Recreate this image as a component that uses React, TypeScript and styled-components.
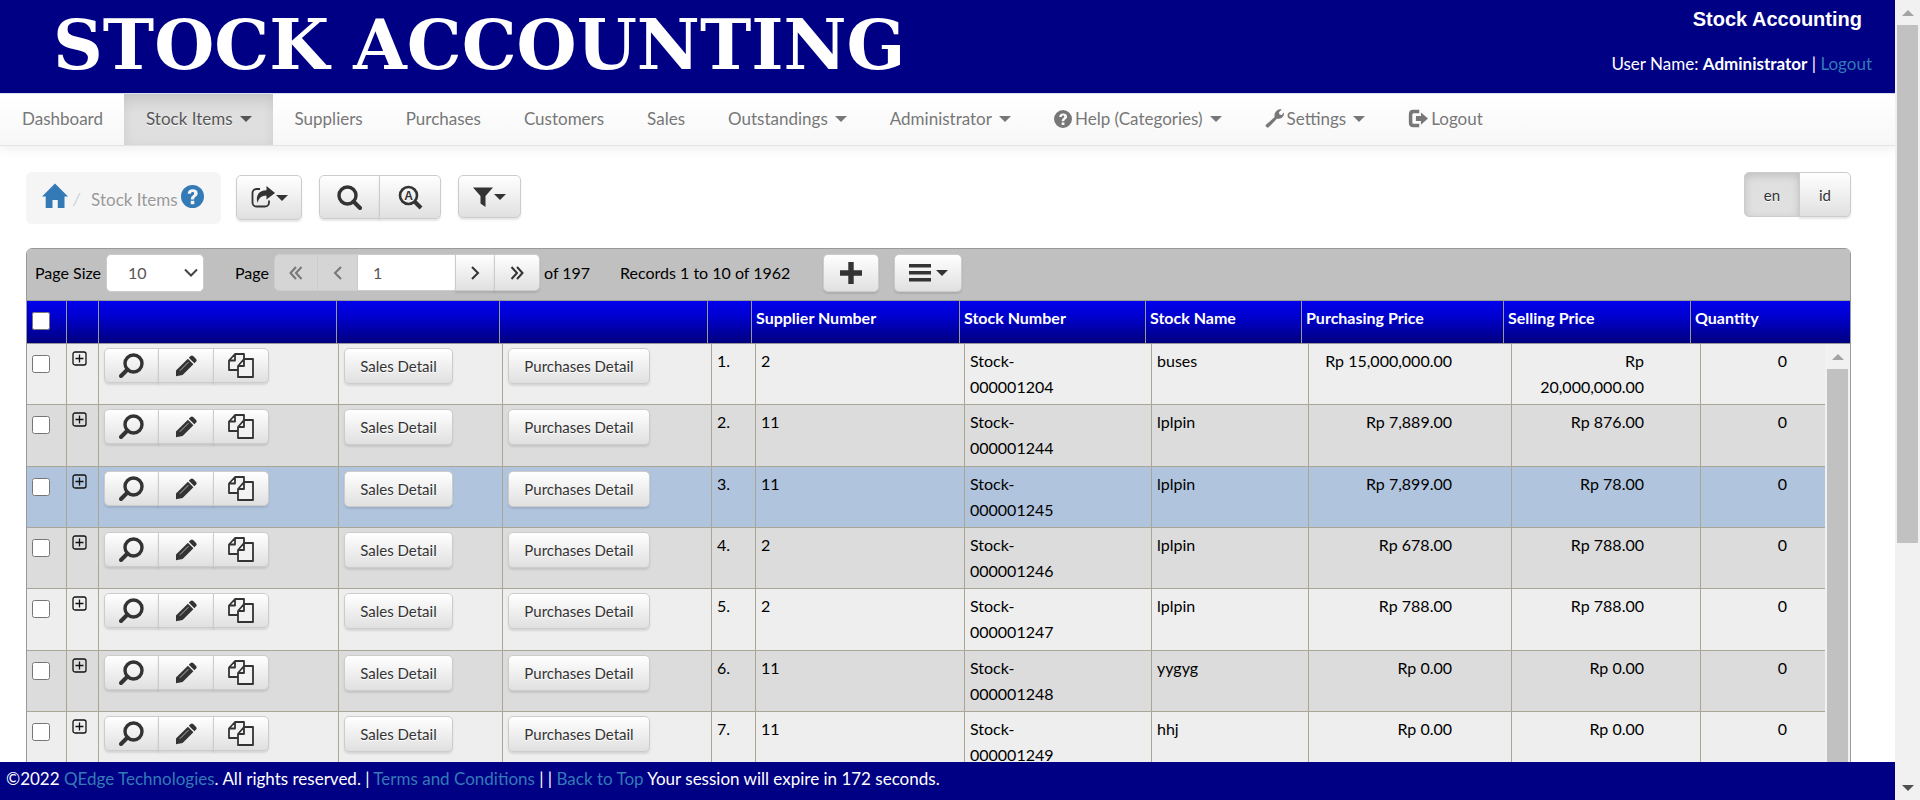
import React from "react";
import styled, { createGlobalStyle, css } from "styled-components";

const GlobalStyle = createGlobalStyle`
  *, *::before, *::after { box-sizing: border-box; }
  body {
    margin: 0;
    background: #fff;
    color: #000;
    font: 16px/26px Lato, "Liberation Sans", sans-serif;
  }
  button, input, select { font: inherit; margin: 0; }
  a { color: #337ab7; text-decoration: none; }
`;

/* ---------- shell ---------- */

const Shell = styled.div`
  display: flex;
  height: 100vh;
  overflow: hidden;
`;

const Page = styled.div`
  flex: 1;
  min-width: 0;
  display: flex;
  flex-direction: column;
`;

const Main = styled.main`
  flex: 1;
  min-height: 0;
  overflow: hidden;
  padding: 26px 44px 0 26px;
`;

const ScrollTrack = styled.div`
  flex: none;
  width: 25px;
  display: flex;
  flex-direction: column;
  align-items: center;
  background: #f1f1f1;
`;

const ScrollArrow = styled.span<{ $down?: boolean }>`
  flex: none;
  height: 25px;
  display: flex;
  align-items: center;
  &::before {
    content: "";
    border: 6px solid transparent;
    border-top-width: ${(p) => (p.$down ? "6px" : "0")};
    border-bottom-width: ${(p) => (p.$down ? "0" : "6px")};
    border-top-color: ${(p) => (p.$down ? "#505050" : "transparent")};
    border-bottom-color: ${(p) => (p.$down ? "transparent" : "#a3a3a3")};
  }
`;

const ScrollLane = styled.span`
  flex: 1;
  width: 21px;
`;

const ScrollThumb = styled.span<{ $size: string }>`
  display: block;
  width: 21px;
  height: ${(p) => p.$size};
  background: #c1c1c1;
`;

/* ---------- header ---------- */

const Banner = styled.header`
  flex: none;
  height: 93px;
  display: flex;
  justify-content: space-between;
  padding: 0 23px 0 53px;
  background: #000084;
  color: #fff;
  font-size: 17px;
`;

const Logo = styled.div`
  font: bold 69px/90px "DejaVu Serif", serif;
  white-space: nowrap;
`;

const Account = styled.div`
  display: flex;
  flex-direction: column;
  gap: 19px;
  padding-top: 6px;
  text-align: right;
`;

const SiteName = styled.strong`
  padding-right: 10px;
  font: bold 20px/26px "Liberation Sans", sans-serif;
`;

const Nav = styled.nav`
  flex: none;
  height: 53px;
  display: flex;
  border-top: 1px solid #dcdcf0;
  border-bottom: 1px solid #e3e3e3;
  background: linear-gradient(#fff, #f7f7f7);
  box-shadow: 0 2px 12px rgba(0, 0, 0, 0.08);
  font-size: 17px;
`;

const NavLink = styled.a<{ $active?: boolean }>`
  display: flex;
  align-items: center;
  gap: 3px;
  padding: 0 21px 2px 22px;
  color: #777;
  white-space: nowrap;
  text-shadow: 0 1px 0 #fff;
  ${(p) =>
    p.$active &&
    css`
      color: #555;
      background: linear-gradient(#d4d4d4, #dfdfdf 40%, #dedede);
      box-shadow: inset 0 3px 12px rgba(0, 0, 0, 0.08);
    `}
`;

const Caret = styled.span<{ $gap?: boolean }>`
  margin-left: ${(p) => (p.$gap ? "4px" : "0")};
  border: 6px solid transparent;
  border-top-color: currentColor;
  border-bottom: 0;
`;

/* ---------- controls ---------- */

const Actions = styled.div`
  display: flex;
  align-items: flex-start;
  height: 76px;
`;

const Crumbs = styled.nav`
  display: flex;
  align-items: center;
  width: 195px;
  height: 52px;
  margin-right: 15px;
  padding: 0 12px 0 16px;
  border-radius: 6px;
  background: #f5f5f5;
  color: #999;
  font-size: 17px;
  white-space: nowrap;
  a { display: flex; padding-bottom: 4px; }
`;

const CrumbText = styled.span`
  padding: 3px 3px 0 5px;
  text-shadow: 0 1px 0 #fff;
  i { margin-right: 11px; color: #ccc; }
`;

const Button = styled.button<{ $w?: number; $h?: number; $pressed?: boolean }>`
  display: inline-flex;
  align-items: center;
  justify-content: center;
  gap: 1px;
  width: ${(p) => (p.$w ? `${p.$w}px` : "auto")};
  height: ${(p) => p.$h ?? 37}px;
  padding: 0;
  border: 1px solid #ccc;
  border-radius: 5px;
  background: linear-gradient(#fff, #e0e0e0);
  box-shadow: 0 2px 2px rgba(0, 0, 0, 0.1);
  color: #333;
  font-size: 15px;
  text-shadow: 0 1px 0 #fff;
  white-space: nowrap;
  ${(p) =>
    p.$pressed &&
    css`
      background: #e0e0e0;
      box-shadow: inset 0 3px 8px rgba(0, 0, 0, 0.15);
    `}
  &:disabled {
    background: #d5d5d5;
    border-color: #ccc;
    color: #777;
    box-shadow: none;
  }
`;

const Group = styled.div`
  display: flex;
  > *:not(:first-child) {
    margin-left: -1px;
    border-top-left-radius: 0;
    border-bottom-left-radius: 0;
  }
  > *:not(:last-child) {
    border-top-right-radius: 0;
    border-bottom-right-radius: 0;
  }
`;

const Tools = styled.div`
  display: flex;
  align-items: flex-start;
  flex: 1;
  gap: 17px;
  padding-top: 3px;
`;

/* ---------- grid ---------- */

const Panel = styled.section`
  border: 1px solid #999;
  border-radius: 6px 6px 0 0;
  background: #fff;
  overflow: hidden;
`;

const Pager = styled.div`
  display: flex;
  align-items: center;
  height: 52px;
  padding: 0 8px 4px;
  border-bottom: 1px solid #999;
  background: #c0c0c0;
  white-space: nowrap;
`;

const PageSizeLabel = styled.label`
  width: 71px;
`;

const PageLabel = styled.label`
  width: 39px;
  margin-left: 31px;
`;

const SelectBox = styled.span`
  position: relative;
  display: flex;
  svg {
    position: absolute;
    right: 6px;
    top: 14px;
    pointer-events: none;
  }
`;

const SizeSelect = styled.select`
  appearance: none;
  width: 98px;
  height: 38px;
  padding: 0 0 0 21px;
  border: 1px solid #ccc;
  border-radius: 5px;
  background: #fff;
  color: #555;
`;

const PageInput = styled.input`
  width: 99px;
  height: 37px;
  padding: 0 15px;
  border: 1px solid #ccc;
  border-radius: 5px;
  background: #fff;
  color: #555;
`;

const PageCount = styled.span`
  width: 80px;
  padding-left: 4px;
`;

const RecordCount = styled.span`
  width: 203px;
`;

const PagerButtons = styled.div`
  display: flex;
  gap: 15px;
`;

const Table = styled.table`
  width: 100%;
  table-layout: fixed;
  border-collapse: separate;
  border-spacing: 0;
`;

const HeadTable = styled(Table)`
  background: linear-gradient(#0000ec, #0000d0 35%, #00007c);
`;

const HeadCell = styled.th`
  height: 43px;
  padding: 4px 4px 0;
  border-right: 1px solid #999;
  border-bottom: 1px solid #999;
  color: #fff;
  text-align: left;
  vertical-align: top;
  &:first-child { padding-left: 5px; }
  &:last-child { border-right: 0; }
`;

const BodyArea = styled.div`
  display: flex;
  > table { flex: 1; min-width: 0; }
`;

const Row = styled.tr<{ $selected?: boolean }>`
  height: 61px;
  background: #eee;
  &:nth-child(even) { background: #dcdcdc; }
  &:nth-child(3n + 2) { height: 62px; }
  ${(p) => p.$selected && css`&& { background: #b0c4de; }`}
`;

const Cell = styled.td<{ $num?: boolean; $right?: number }>`
  padding: 4px ${(p) => p.$right ?? 4}px 3px ${(p) => (p.$num ? 12 : 5)}px;
  border-right: 1px solid #a9a695;
  border-bottom: 1px solid #a9a695;
  vertical-align: top;
  text-align: ${(p) => (p.$num ? "right" : "left")};
  &:last-child { border-right: 0; }
`;

const Check = styled.input`
  display: block;
  width: 18px;
  height: 18px;
  margin: 7px 0 0;
`;

const Expand = styled.button`
  display: flex;
  margin-top: 3px;
  padding: 0;
  border: 0;
  background: none;
`;

const Footer = styled.footer`
  flex: none;
  height: 38px;
  padding: 4px 6px;
  background: #000084;
  color: #fff;
  font-size: 17px;
  white-space: nowrap;
`;

/* ---------- icons ---------- */

type IconProps = { w?: number; h?: number };

const Svg = ({ w = 24, h = w, box, children }: IconProps & { box: string; children: React.ReactNode }) => (
  <svg width={w} height={h} viewBox={box} fill="currentColor" aria-hidden="true">
    {children}
  </svg>
);

const HomeIcon = () => (
  <Svg w={26} box="0 0 26 26">
    <path d="M13 0.5 26 13.5h-3.5V25h-6.7v-8h-5.3v8H3.7V13.5H0z" />
  </Svg>
);

const HelpIcon = ({ w = 18 }: IconProps) => (
  <Svg w={w} box="0 0 24 24">
    <path
      fillRule="evenodd"
      d="M12 0a12 12 0 1 1 0 24 12 12 0 0 1 0-24zM7 9.2h3.4c0-1.4.6-2 1.7-2s1.7.6 1.7 1.6c0 .9-.6 1.4-1.5 2.1-1.3 1-2 1.9-2 4.1h3.4c0-1.3.4-1.8 1.6-2.7 1.3-.9 2.1-2 2.1-3.7C17.400 6 15.400 4.500 12.200 4.500 8.900 4.500 7 6.300 7 9.200zM10.200 16.500v3.500h3.700v-3.500z"
    />
  </Svg>
);

const WrenchIcon = () => (
  <Svg w={19} box="0 0 24 24">
    <path d="M1.200 19.800 12.200 10.200C11.400 7 12.600 4 14.800 2.200 16.700.6 19 .1 21.200.7L17.600 4.200l.7 2.800 2.700.7L24 4.300c.4 2.200-.3 4.500-2.100 6.100-1.900 1.800-4.500 2.400-6.900 1.900L4.600 23.200c-.6.6-1.500.6-2.100 0L1 21.800c-.6-.6-.5-1.400.2-2z" />
  </Svg>
);

const LogoutIcon = () => (
  <Svg w={20} box="0 0 24 24">
    <path d="M13.500 1v4H7.200c-1.300 0-2 .7-2 2v8.800c0 1.300.7 2 2 2h6.300v4H6c-3.100 0-5-1.900-5-5V6c0-3.100 1.900-5 5-5zM15.500 4.200l8.500 7.300-8.500 7.300v-4.300h-6V8.500h6z" />
  </Svg>
);

const ShareIcon = () => (
  <Svg w={24} box="0 0 24 24">
    <path
      d="M9 3H5.500A4 4 0 0 0 1.500 7v9.500a4 4 0 0 0 4 4H14a4 4 0 0 0 4-4v-2"
      fill="none"
      stroke="currentColor"
      strokeWidth="1.800"
    />
    <path d="M15.500 0 24 7l-8.500 6.500V9.800C10.500 9.500 8 11.500 6.500 17 4.300 9.500 8 4.300 15.500 4.200z" />
  </Svg>
);

const SearchIcon = ({ letter = false, flip = false }: { letter?: boolean; flip?: boolean }) => (
  <Svg w={25} box="0 0 25 25">
    <g transform={flip ? "matrix(-1 0 0 1 25 0)" : undefined}>
      <circle cx="10.500" cy="10.500" r="8.500" fill="none" stroke="currentColor" strokeWidth={letter ? 2.600 : 3.400} />
      <path d="m16.500 16.500 6.500 6.500" stroke="currentColor" strokeWidth="4" strokeLinecap={letter ? "butt" : "round"} />
    </g>
    {letter && (
      <text x="10.500" y="15" textAnchor="middle" fontFamily="Liberation Sans, sans-serif" fontWeight="bold" fontSize="12">
        A
      </text>
    )}
  </Svg>
);

const FilterIcon = () => (
  <Svg w={20} box="0 0 20 20">
    <path d="M0 .5h20L12.500 9v11L7.500 16.500V9z" />
  </Svg>
);

const PencilIcon = () => (
  <Svg w={22} box="0 0 22 22">
    <path d="M15.600 1c.8-.8 1.800-.8 2.600 0l2.900 2.900c.8.8.8 1.800 0 2.600l-1.800 1.800-5.500-5.500zM12.900 3.700 18.400 9.200 7.600 20 1 21.200v-5.600z" />
    <path d="m4.800 15.800 8.700-8.700" stroke="#e4e4e4" strokeWidth=".7" />
  </Svg>
);

const CopyIcon = () => (
  <Svg w={26} h={25} box="0 0 26 25">
    <g fill="#f2f2f2" stroke="currentColor" strokeWidth="1.800" strokeLinejoin="round">
      <path d="M7 1h9v16H1V7.500zM7 1v6.500H1" />
      <path d="M16 6h9v18H10V13zM16 6v7h-6" />
    </g>
  </Svg>
);

const PlusBoxIcon = () => (
  <Svg w={15} box="0 0 15 15">
    <rect x="1" y="1" width="13" height="13" rx="2" fill="none" stroke="#111" strokeWidth="1.300" />
    <path d="M7.500 3.500v8M3.500 7.500h8" stroke="#111" strokeWidth="1.300" />
  </Svg>
);

const AddIcon = () => (
  <Svg w={22} box="0 0 22 22">
    <path d="M8.300 0h5.400v8.300H22v5.400h-8.300V22H8.300v-8.300H0V8.300h8.300z" />
  </Svg>
);

const MenuIcon = () => (
  <Svg w={22} h={18} box="0 0 22 18">
    <path d="M0 0h22v3.500H0zM0 7h22v3.500H0zM0 14h22v3.500H0z" />
  </Svg>
);

const DownIcon = () => (
  <Svg w={14} h={9} box="0 0 14 9">
    <path d="m1 1.500 6 6 6-6" fill="none" stroke="#444" strokeWidth="2" />
  </Svg>
);

const Chevrons = ({ double, left }: { double?: boolean; left?: boolean }) => (
  <Svg w={14} box="0 0 14 14">
    <g fill="none" stroke="currentColor" strokeWidth="2" transform={left ? "matrix(-1 0 0 1 14 0)" : undefined}>
      {double ? <path d="m1.500 1 5.500 6-5.500 6M7 1l5.500 6L7 13" /> : <path d="m4 1 6 6-6 6" />}
    </g>
  </Svg>
);

/* ---------- data ---------- */

type NavItem = { label: string; menu?: boolean; active?: boolean; icon?: React.ReactNode };

const navItems: NavItem[] = [
  { label: "Dashboard" },
  { label: "Stock Items", menu: true, active: true },
  { label: "Suppliers" },
  { label: "Purchases" },
  { label: "Customers" },
  { label: "Sales" },
  { label: "Outstandings", menu: true },
  { label: "Administrator", menu: true },
  { label: "Help (Categories)", menu: true, icon: <HelpIcon /> },
  { label: "Settings", menu: true, icon: <WrenchIcon /> },
  { label: "Logout", icon: <LogoutIcon /> },
];

const headers: [string, string][] = [
  ["select", "40px"],
  ["", "32px"],
  ["", "238px"],
  ["", "163px"],
  ["", "208px"],
  ["", "44px"],
  ["Supplier Number", "208px"],
  ["Stock Number", "186px"],
  ["Stock Name", "156px"],
  ["Purchasing Price", "202px"],
  ["Selling Price", "187px"],
  ["Quantity", "auto"],
];

const bodyWidths = ["40px", "32px", "240px", "164px", "209px", "44px", "209px", "187px", "157px", "203px", "189px", "auto"];

const items = [
  { supplier: "2", stock: "1204", name: "buses", buy: "15,000,000.00", sell: "20,000,000.00" },
  { supplier: "11", stock: "1244", name: "lplpin", buy: "7,889.00", sell: "876.00" },
  { supplier: "11", stock: "1245", name: "lplpin", buy: "7,899.00", sell: "78.00", selected: true },
  { supplier: "2", stock: "1246", name: "lplpin", buy: "678.00", sell: "788.00" },
  { supplier: "2", stock: "1247", name: "lplpin", buy: "788.00", sell: "788.00" },
  { supplier: "11", stock: "1248", name: "yygyg", buy: "0.00", sell: "0.00" },
  { supplier: "11", stock: "1249", name: "hhj", buy: "0.00", sell: "0.00" },
];

/* ---------- sections ---------- */

const Scrollbar = ({ size, end }: { size: string; end?: boolean }) => (
  <ScrollTrack>
    <ScrollArrow />
    <ScrollLane>
      <ScrollThumb $size={size} />
    </ScrollLane>
    {end && <ScrollArrow $down />}
  </ScrollTrack>
);

const PagerBar = () => (
  <Pager>
    <PageSizeLabel htmlFor="page-size">Page Size</PageSizeLabel>
    <SelectBox>
      <SizeSelect id="page-size" defaultValue="10">
        <option>10</option>
        <option>20</option>
        <option>50</option>
      </SizeSelect>
      <DownIcon />
    </SelectBox>
    <PageLabel htmlFor="page-no">Page</PageLabel>
    <Group>
      <Button $w={44} disabled aria-label="First page"><Chevrons double left /></Button>
      <Button $w={41} disabled aria-label="Previous page"><Chevrons left /></Button>
      <PageInput id="page-no" defaultValue="1" />
      <Button $w={40} aria-label="Next page"><Chevrons /></Button>
      <Button $w={46} aria-label="Last page"><Chevrons double /></Button>
    </Group>
    <PageCount>of 197</PageCount>
    <RecordCount>Records 1 to 10 of 1962</RecordCount>
    <PagerButtons>
      <Button $w={56} $h={38} aria-label="Add"><AddIcon /></Button>
      <Button $w={68} $h={38} aria-label="Options"><MenuIcon /><Caret $gap /></Button>
    </PagerButtons>
  </Pager>
);

const StockTable = () => (
  <Panel>
    <PagerBar />
    <HeadTable>
      <colgroup>
        {headers.map(([, width], i) => <col key={i} style={{ width }} />)}
      </colgroup>
      <thead>
        <tr>
          {headers.map(([label], i) => (
            <HeadCell key={i} scope="col">
              {label === "select" ? <Check type="checkbox" aria-label="Select all" /> : label}
            </HeadCell>
          ))}
        </tr>
      </thead>
    </HeadTable>
    <BodyArea>
      <Table>
        <colgroup>
          {bodyWidths.map((width, i) => <col key={i} style={{ width }} />)}
        </colgroup>
        <tbody>
          {items.map((item, i) => (
            <Row key={item.stock} $selected={item.selected}>
              <Cell><Check type="checkbox" aria-label={`Select row ${i + 1}`} /></Cell>
              <Cell><Expand aria-label="Expand"><PlusBoxIcon /></Expand></Cell>
              <Cell>
                <Group>
                  <Button $w={55} $h={35} aria-label="View"><SearchIcon flip /></Button>
                  <Button $w={56} $h={35} aria-label="Edit"><PencilIcon /></Button>
                  <Button $w={56} $h={35} aria-label="Copy"><CopyIcon /></Button>
                </Group>
              </Cell>
              <Cell><Button $w={109} $h={36}>Sales Detail</Button></Cell>
              <Cell><Button $w={142} $h={36}>Purchases Detail</Button></Cell>
              <Cell>{i + 1}.</Cell>
              <Cell>{item.supplier}</Cell>
              <Cell $right={60}>Stock-<wbr />00000{item.stock}</Cell>
              <Cell>{item.name}</Cell>
              <Cell $num $right={59}>Rp {item.buy}</Cell>
              <Cell $num $right={56}>Rp {item.sell}</Cell>
              <Cell $num $right={38}>0</Cell>
            </Row>
          ))}
        </tbody>
      </Table>
      <Scrollbar size="100%" />
    </BodyArea>
  </Panel>
);

export default function App() {
  return (
    <>
      <GlobalStyle />
      <Shell>
        <Page>
          <Banner>
            <Logo>STOCK ACCOUNTING</Logo>
            <Account>
              <SiteName>Stock Accounting</SiteName>
              <div>User Name: <b>Administrator</b> | <a href="#logout">Logout</a></div>
            </Account>
          </Banner>
          <Nav>
            {navItems.map((n) => (
              <NavLink key={n.label} href="#" $active={n.active}>
                {n.icon}
                {n.label}
                {n.menu && <Caret $gap />}
              </NavLink>
            ))}
          </Nav>
          <Main>
            <Actions>
              <Crumbs>
                <a href="#home" aria-label="Home"><HomeIcon /></a>
                <CrumbText><i>/</i>Stock Items</CrumbText>
                <a href="#help" aria-label="Help"><HelpIcon w={23} /></a>
              </Crumbs>
              <Tools>
                <Button $w={66} $h={45} aria-label="Export"><ShareIcon /><Caret /></Button>
                <Group>
                  <Button $w={61} $h={44} aria-label="Search"><SearchIcon /></Button>
                  <Button $w={62} $h={44} aria-label="Advanced search"><SearchIcon letter /></Button>
                </Group>
                <Button $w={63} $h={43} aria-label="Filter"><FilterIcon /><Caret /></Button>
              </Tools>
              <Group>
                <Button $w={56} $h={45} $pressed>en</Button>
                <Button $w={52} $h={45}>id</Button>
              </Group>
            </Actions>
            <StockTable />
          </Main>
          <Footer>
            ©2022 <a href="#qedge">QEdge Technologies</a>. All rights reserved. | <a href="#terms">Terms and Conditions</a> | |{" "}
            <a href="#top">Back to Top</a> Your session will expire in 172 seconds.
          </Footer>
        </Page>
        <Scrollbar size="69%" end />
      </Shell>
    </>
  );
}
